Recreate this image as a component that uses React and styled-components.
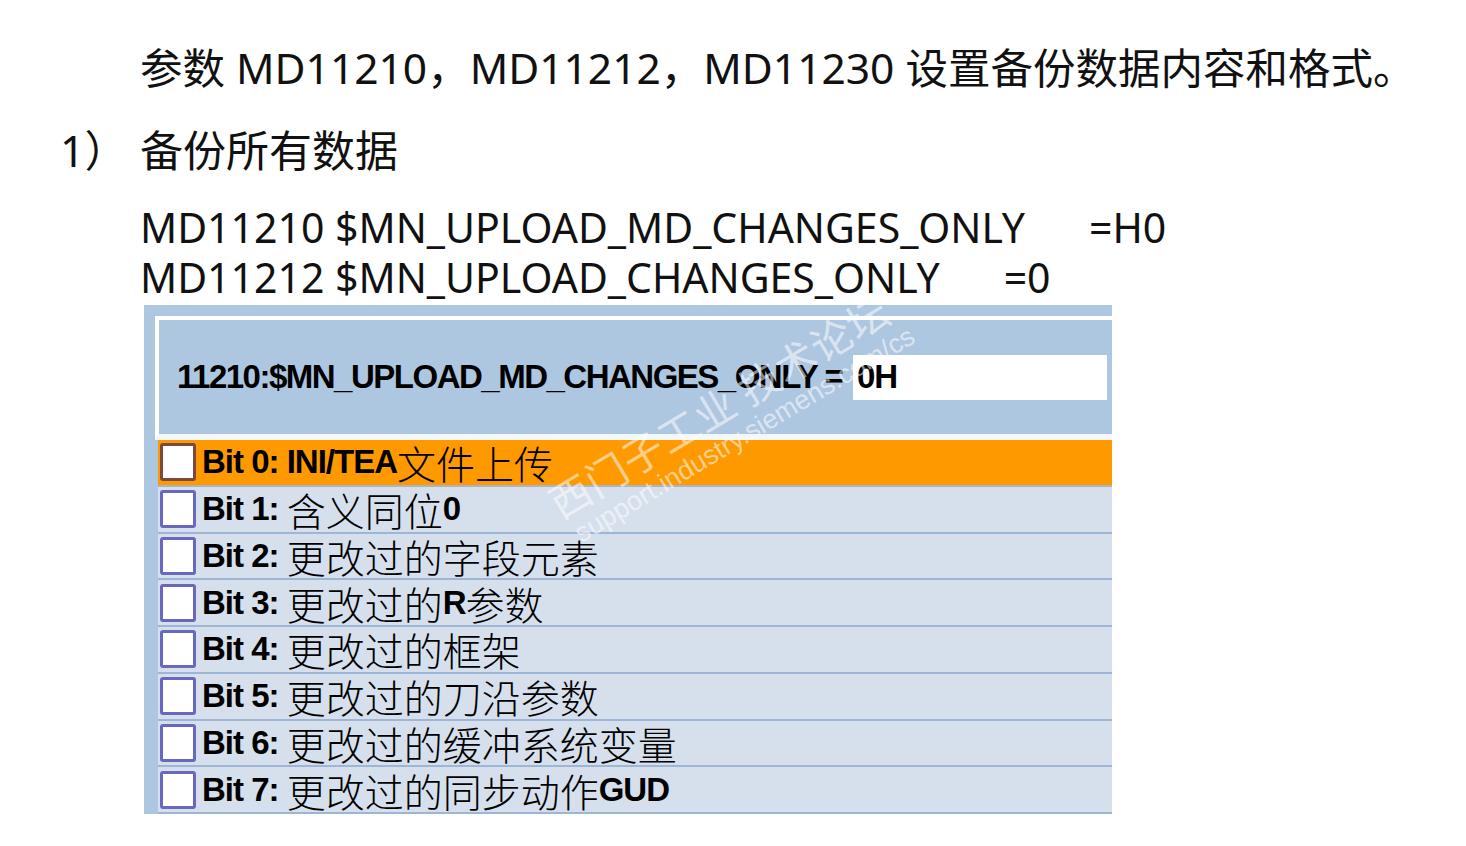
import React from "react";
import styled, { createGlobalStyle } from "styled-components";

const GlobalStyle = createGlobalStyle`
  html, body {
    margin: 0;
    padding: 0;
    background: #ffffff;
  }
  body {
    font-family: "Noto Sans", "Noto Sans CJK SC", sans-serif;
    color: #111111;
  }
`;

const Page = styled.div`
  width: 1466px;
  height: 846px;
  overflow: hidden;
  padding-top: 40px;
  box-sizing: border-box;
`;

const TextLine = styled.div`
  display: flex;
  align-items: center;
  height: ${(p) => p.$h || 52}px;
  margin-top: ${(p) => p.$mt || 0}px;
  padding-left: ${(p) => p.$indent || 140}px;
  font-size: ${(p) => p.$size || 41}px;
  line-height: 1;
  white-space: pre;
`;

const ListNum = styled.span`
  width: 80px;
  flex: none;
`;

const Assign = styled.span`
  margin-left: ${(p) => p.$gap}px;
`;

const Panel = styled.div`
  position: relative;
  margin-left: 144px;
  margin-top: 3px;
  width: 968px;
  background: #aec7e0;
  padding: 11px 0 0 11px;
  box-sizing: border-box;
  overflow: hidden;
`;

const Header = styled.div`
  display: flex;
  align-items: center;
  height: 124px;
  box-sizing: border-box;
  border-top: 4px solid #ffffff;
  border-left: 4px solid #ffffff;
  border-bottom: 6px solid #f4f7fb;
  padding-left: 18px;
  padding-right: 5px;
`;

const HmiText = styled.span`
  font-family: "Liberation Sans", "Noto Sans CJK SC", sans-serif;
  font-weight: bold;
  font-size: ${(p) => p.$size || 33}px;
  letter-spacing: ${(p) => p.$ls || -1}px;
  color: #000000;
  white-space: pre;
`;

const Label = styled(HmiText)`
  flex: 1;
`;

const ValueBox = styled.div`
  width: 254px;
  height: 45px;
  background: #ffffff;
  display: flex;
  align-items: center;
  padding-left: 4px;
  box-sizing: border-box;
`;

const Rows = styled.div`
  display: flex;
  flex-direction: column;
  margin-left: 3px;
`;

const Row = styled.div`
  display: flex;
  align-items: center;
  height: 46.75px;
  box-sizing: border-box;
  padding-left: 2px;
  background: ${(p) => (p.$active ? "#ff9900" : "#d6e0ec")};
  border-bottom: 2px solid ${(p) => (p.$active ? "#a9b5c4" : "#9db6d6")};
`;

const Box = styled.span`
  width: 36px;
  height: 38px;
  flex: none;
  box-sizing: border-box;
  border: 3px solid ${(p) => (p.$active ? "#7a4a40" : "#6868c0")};
  border-radius: 3px;
  background: #ffffff;
  margin-right: 6px;
`;

const Cjk = styled.span`
  font-family: "Noto Sans CJK SC", sans-serif;
  font-weight: 300;
  font-size: 39px;
  color: #000000;
  white-space: pre;
`;

const Watermark = styled.div`
  position: absolute;
  left: 436px;
  bottom: 262px;
  transform: rotate(-31deg);
  transform-origin: left bottom;
  color: rgba(255, 255, 255, 0.55);
  pointer-events: none;
`;

const WmBig = styled.div`
  font-family: "Noto Sans CJK SC", sans-serif;
  font-size: 41px;
  line-height: 1.2;
  letter-spacing: 1px;
  white-space: pre;
`;

const WmSmall = styled.div`
  font-family: "Liberation Sans", sans-serif;
  font-size: 27px;
  line-height: 1.1;
  margin-left: 6px;
  white-space: pre;
`;

const bits = [
  ["Bit 0: INI/TEA", "文件上传", ""],
  ["Bit 1: ", "含义同位", "0"],
  ["Bit 2: ", "更改过的字段元素", ""],
  ["Bit 3: ", "更改过的", "R", "参数"],
  ["Bit 4: ", "更改过的框架", ""],
  ["Bit 5: ", "更改过的刀沿参数", ""],
  ["Bit 6: ", "更改过的缓冲系统变量", ""],
  ["Bit 7: ", "更改过的同步动作", "GUD"],
];

export default function App() {
  return (
    <Page>
      <GlobalStyle />
      <TextLine $h={56} $size={42.5}>参数 MD11210，MD11212，MD11230 设置备份数据内容和格式。</TextLine>
      <TextLine $indent={60} $mt={26} $h={56} $size={43}>
        <ListNum>1）</ListNum>备份所有数据
      </TextLine>
      <TextLine $mt={24} $h={50}>
        MD11210 $MN_UPLOAD_MD_CHANGES_ONLY<Assign $gap={64}>=H0</Assign>
      </TextLine>
      <TextLine $h={50}>
        MD11212 $MN_UPLOAD_CHANGES_ONLY<Assign $gap={64}>=0</Assign>
      </TextLine>
      <Panel>
        <Header>
          <Label $ls={-1.5}>11210:$MN_UPLOAD_MD_CHANGES_ONLY =</Label>
          <ValueBox>
            <HmiText>0H</HmiText>
          </ValueBox>
        </Header>
        <Rows>
          {bits.map((b, i) => (
            <Row key={i} $active={i === 0}>
              <Box $active={i === 0} />
              <HmiText>{b[0]}</HmiText>
              <Cjk>{b[1]}</Cjk>
              {b[2] && <HmiText>{b[2]}</HmiText>}
              {b[3] && <Cjk>{b[3]}</Cjk>}
            </Row>
          ))}
        </Rows>
        <Watermark>
          <WmBig>西门子工业 技术论坛</WmBig>
          <WmSmall>support.industry.siemens.com/cs</WmSmall>
        </Watermark>
      </Panel>
    </Page>
  );
}
